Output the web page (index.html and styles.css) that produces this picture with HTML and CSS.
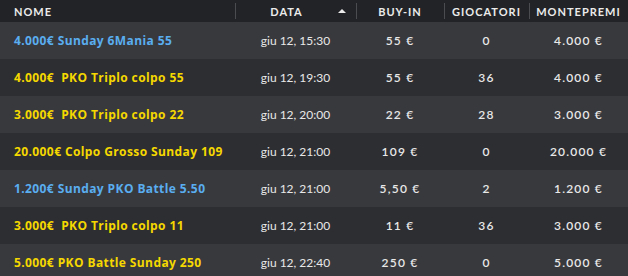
FILE: index.html
```html
<!DOCTYPE html>
<html lang="it">
<head>
<meta charset="UTF-8">
<title>Tornei</title>
<link rel="stylesheet" href="styles.css">
</head>
<body>

<table class="lobby">
  <colgroup>
    <col class="c-name">
    <col class="c-date">
    <col class="c-buyin">
    <col class="c-players">
    <col class="c-prize">
  </colgroup>
  <thead>
    <tr>
      <th class="name">Nome</th>
      <th class="sorted">Data <span class="arrow"></span></th>
      <th>Buy-in</th>
      <th>Giocatori</th>
      <th>Montepremi</th>
    </tr>
  </thead>
  <tbody>
    <tr>
      <td class="name blue">4.000€ Sunday 6Mania 55</td>
      <td class="date">giu 12, 15:30</td>
      <td>55 €</td>
      <td>0</td>
      <td>4.000 €</td>
    </tr>
    <tr>
      <td class="name yellow">4.000€&nbsp; PKO Triplo colpo 55</td>
      <td class="date">giu 12, 19:30</td>
      <td>55 €</td>
      <td>36</td>
      <td>4.000 €</td>
    </tr>
    <tr>
      <td class="name yellow">3.000€&nbsp; PKO Triplo colpo 22</td>
      <td class="date">giu 12, 20:00</td>
      <td>22 €</td>
      <td>28</td>
      <td>3.000 €</td>
    </tr>
    <tr>
      <td class="name yellow">20.000€ Colpo Grosso Sunday 109</td>
      <td class="date">giu 12, 21:00</td>
      <td>109 €</td>
      <td>0</td>
      <td>20.000 €</td>
    </tr>
    <tr>
      <td class="name blue">1.200€ Sunday PKO Battle 5.50</td>
      <td class="date">giu 12, 21:00</td>
      <td>5,50 €</td>
      <td>2</td>
      <td>1.200 €</td>
    </tr>
    <tr>
      <td class="name yellow">3.000€&nbsp; PKO Triplo colpo 11</td>
      <td class="date">giu 12, 21:00</td>
      <td>11 €</td>
      <td>36</td>
      <td>3.000 €</td>
    </tr>
    <tr>
      <td class="name yellow">5.000€ PKO Battle Sunday 250</td>
      <td class="date">giu 12, 22:40</td>
      <td>250 €</td>
      <td>0</td>
      <td>5.000 €</td>
    </tr>
  </tbody>
</table>

</body>
</html>
```

FILE: styles.css
```css
body {
  margin: 0;
  background-color: #2d2e32;
  font-family: 'Lato', 'Open Sans', sans-serif;
  color: #e8e8e8;
}

/* Table */
.lobby {
  width: 628px;
  border-collapse: collapse;
  table-layout: fixed;
}

.c-name { width: 235px; }
.c-date { width: 121px; }
.c-buyin { width: 88px; }
.c-players { width: 85px; }
.c-prize { width: 99px; }

/* Header */
.lobby thead tr {
  background-color: #222326;
  height: 22px;
}

.lobby th {
  position: relative;
  padding: 0;
  font-size: 11px;
  font-weight: bold;
  letter-spacing: 1px;
  text-transform: uppercase;
  text-align: center;
  color: #ebebeb;
}

.lobby th + th::before {
  content: '';
  position: absolute;
  left: 0;
  top: 3px;
  bottom: 3px;
  width: 1px;
  background-color: #4b4c50;
}

.lobby th.name {
  text-align: left;
  padding-left: 14px;
}

.lobby th.sorted {
  padding-right: 18px;
}

.arrow {
  position: absolute;
  right: 10px;
  top: 9px;
  width: 0;
  height: 0;
  border-left: 4px solid transparent;
  border-right: 4px solid transparent;
  border-bottom: 4px solid #ebebeb;
}

/* Rows */
.lobby tbody tr {
  height: 37px;
}

.lobby tbody tr:nth-child(odd) {
  background-color: #38393d;
}

.lobby tbody tr:nth-child(even) {
  background-color: #2d2e32;
}

.lobby td {
  padding: 0;
  font-size: 12px;
  font-weight: 600;
  letter-spacing: 1.2px;
  text-align: center;
  white-space: nowrap;
}

.lobby td.date {
  font-weight: normal;
  letter-spacing: 0;
}

.lobby td.name {
  text-align: left;
  padding-left: 14px;
  font-family: 'Open Sans', sans-serif;
  font-weight: bold;
  letter-spacing: 0.4px;
}

.blue { color: #5aaef0; }
.yellow { color: #f5d800; }
```
